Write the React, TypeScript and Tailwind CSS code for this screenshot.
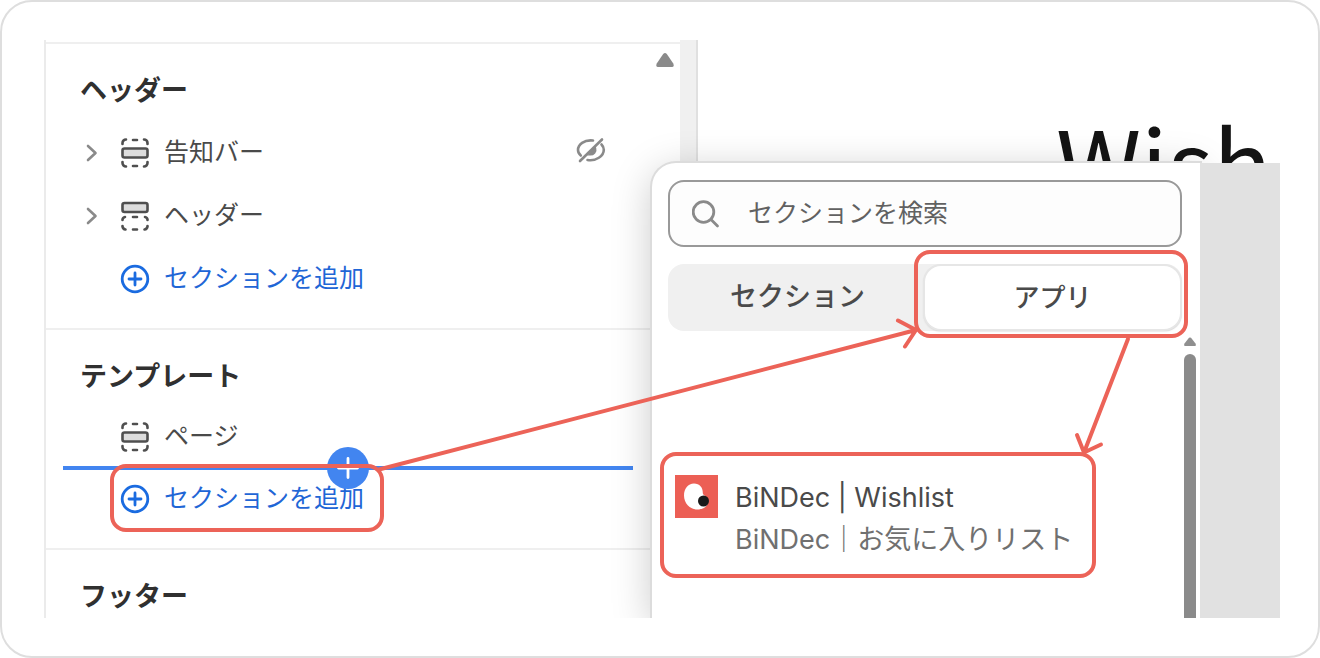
import type { ReactNode } from 'react';

const jp = "font-['Noto_Sans_CJK_JP',sans-serif]";

function SectionIcon() {
  return (
    <svg width="28" height="30" viewBox="0 0 28 30" fill="none" stroke="#4f4f4f" strokeWidth="2.6" strokeLinecap="round">
      <path d="M1.5 6V5a3.5 3.5 0 0 1 3.5-3.5M23 1.5A3.5 3.5 0 0 1 26.5 5v1M12 2h4M1.5 24v1A3.5 3.5 0 0 0 5 28.5M26.5 24v1a3.5 3.5 0 0 1-3.5 3.5M12 28h4" />
      <rect x="1.5" y="10.5" width="25" height="9" rx="2" fill="#ddd" />
    </svg>
  );
}

function HeaderIcon() {
  return (
    <svg width="28" height="30" viewBox="0 0 28 30" fill="none" stroke="#4f4f4f" strokeWidth="2.6" strokeLinecap="round">
      <rect x="1.5" y="2" width="25" height="9" rx="2" fill="#ddd" />
      <path d="M1.5 19v-.5A3 3 0 0 1 4 16M24 16a3 3 0 0 1 2.5 2.5V19M12 16h4M1.5 25v.5A3.5 3.5 0 0 0 4.5 28.5M26.5 25v.5a3.5 3.5 0 0 1-3 3M12 28.5h4" />
    </svg>
  );
}

function ChevronIcon() {
  return (
    <svg width="12" height="18" viewBox="0 0 12 18" fill="none" stroke="#8a8a8a" strokeWidth="2.6" strokeLinecap="round" strokeLinejoin="round">
      <path d="M2 2l7.5 7L2 16" />
    </svg>
  );
}

function PlusCircleIcon() {
  return (
    <svg width="30" height="30" viewBox="0 0 30 30" fill="none" stroke="#1a6be0" strokeWidth="2.8" strokeLinecap="round">
      <circle cx="15" cy="15" r="12.8" />
      <path d="M15 9v12M9 15h12" />
    </svg>
  );
}

function HiddenIcon() {
  return (
    <svg width="30" height="28" viewBox="0 0 30 28" fill="none" stroke="#8a8a8a" strokeWidth="2.6" strokeLinecap="round">
      <path d="M26 2.500L4 24" />
      <path d="M17 3.500C8 2.500 2 7.500 2 13c0 2 1 4 2.800 5.500M25.500 7.500c1.500 1.600 2.300 3.500 2.300 5.200C27.800 19 20 24.500 11.500 23" />
      <path d="M19 11.500c1 3-1.500 6-5 5.800z" fill="#8a8a8a" />
    </svg>
  );
}

function SearchIcon() {
  return (
    <svg width="28" height="28" viewBox="0 0 28 28" fill="none" stroke="#8a8a8a" strokeWidth="2.8" strokeLinecap="round">
      <circle cx="11.500" cy="12" r="10.300" />
      <path d="M19 19.500l6.500 6.500" />
    </svg>
  );
}

function AppLogo() {
  return (
    <svg width="43" height="43" viewBox="0 0 43 43">
      <rect width="43" height="43" fill="#ec5f55" />
      <path d="M19 8.500c5.500 0 9 4 8.800 9.500-.1 2.500 5.500 3.500 5.500 8 0 5-5 8.500-11 8.500C14.500 34.500 9 28 9 20.500 9 13.500 13 8.500 19 8.500z" fill="#fff" />
      <circle cx="28.500" cy="26" r="5.500" fill="#1a1a1a" />
    </svg>
  );
}

function Section({ title, children }: { title: string; children?: ReactNode }) {
  return (
    <section className="border-t-2 border-[#efefef] pt-3.5 pb-[18px]">
      <h2 className="flex h-[63px] items-center pl-[34px] text-[27px] font-bold text-[#303030]">{title}</h2>
      {children}
    </section>
  );
}

function Row({ icon, label, expandable, hidden, short }: {
  icon: ReactNode;
  label: string;
  expandable?: boolean;
  hidden?: boolean;
  short?: boolean;
}) {
  return (
    <div className={`flex items-center pl-10 pr-[74px] ${short ? 'h-[60px]' : 'h-[63px]'}`}>
      <span className="w-[35px]">{expandable && <ChevronIcon />}</span>
      <span className="w-[43px]">{icon}</span>
      <span className="flex-1 pb-1 text-[25px] text-[#4a4a4a]">{label}</span>
      {hidden && <button type="button" aria-label="表示" className="pb-1"><HiddenIcon /></button>}
    </div>
  );
}

function AddSection() {
  return (
    <button type="button" className="flex h-[63px] items-center gap-3.5 pl-[74px] text-[25px] text-[#1f66d6]">
      <PlusCircleIcon />
      <span className="pb-1">セクションを追加</span>
    </button>
  );
}

function Sidebar() {
  return (
    <aside className="relative w-[636px] shrink-0 border-l-2 border-[#ebebeb] pt-0.5">
      <Section title="ヘッダー">
        <Row icon={<SectionIcon />} label="告知バー" expandable hidden />
        <Row icon={<HeaderIcon />} label="ヘッダー" expandable />
        <AddSection />
      </Section>
      <Section title="テンプレート">
        <Row icon={<SectionIcon />} label="ページ" short />
        <div className="relative">
          <AddSection />
          <div className="absolute -top-px left-[17px] flex h-1 w-[570px] items-center justify-center bg-[#4285f0]">
            <button type="button" aria-label="追加" className="flex size-[42px] shrink-0 items-center justify-center rounded-full bg-[#4285f0]">
              <svg width="22" height="22" viewBox="0 0 22 22" stroke="#fff" strokeWidth="2.8" strokeLinecap="round">
                <path d="M11 1.500v19M1.500 11h19" />
              </svg>
            </button>
          </div>
        </div>
      </Section>
      <Section title="フッター" />
      <svg className="absolute top-3 right-[6px]" width="18" height="15" viewBox="0 0 18 15" fill="#8a8a8a">
        <path d="M7.200 2Q9 0 10.800 2L17.300 11.500Q18.500 15 16 15H2Q-.5 15 .7 11.500z" />
      </svg>
    </aside>
  );
}

function SectionPicker() {
  return (
    <div className="absolute top-[123px] bottom-0 left-[608px] w-[548px] rounded-tl-[24px] bg-white pt-[17px] pr-[18px] pl-4 shadow-[0_0_0_2px_#dcdcdc,0_8px_40px_rgba(0,0,0,0.22)]">
      <label className="flex h-[67px] items-center gap-7 rounded-2xl border-2 border-[#999] bg-[#fdfdfd] pl-[22px]">
        <SearchIcon />
        <input
          type="search"
          aria-label="セクションを検索"
          placeholder="セクションを検索"
          className="min-w-0 flex-1 bg-transparent pb-1 text-[25px] text-[#616161] outline-none placeholder:text-[#616161]"
        />
      </label>
      <div className="mt-[17px] flex h-[67px] rounded-2xl bg-[#f0f0f0] p-0.5">
        <button type="button" className="flex-1 pb-1 text-[27px] font-medium text-[#4a4a4a]">セクション</button>
        <button type="button" className="flex-1 rounded-2xl bg-white pb-1 text-[26px] font-medium text-[#4a4a4a] shadow-[0_0_0_2px_#e6e6e6,0_1px_2px_1px_#bbb]">アプリ</button>
      </div>
      <button type="button" className="mt-36 flex items-start gap-[17px] pl-[7px] text-left">
        <AppLogo />
        <span className="flex flex-col pt-0.5 font-['Inter','Noto_Sans_CJK_JP',sans-serif] text-[27px] leading-[42px]">
          <span className="text-[#4a4a4a]">BiNDec | Wishlist</span>
          <span className="text-[#707070]">BiNDec｜お気に入りリスト</span>
        </span>
      </button>
      <div className="absolute top-[174px] right-1 bottom-0 flex w-3 flex-col gap-2">
        <svg className="shrink-0" width="12" height="9" viewBox="0 0 12 9" fill="#8f8f8f">
          <path d="M5 .8Q6 0 7 .8L11.500 6.500Q12.500 9 11 9H1Q-.5 9 .5 6.500z" />
        </svg>
        <div className="flex-1 rounded-t-full bg-[#8a8a8a]" />
      </div>
    </div>
  );
}

function Callouts() {
  return (
    <svg className="pointer-events-none absolute top-0 left-0 z-20" width="1236" height="578" viewBox="44 40 1236 578" fill="none" stroke="#ec6358" strokeWidth="4" strokeLinecap="round" strokeLinejoin="round">
      <rect x="112" y="466" width="270" height="64" rx="14" />
      <rect x="916" y="252" width="270" height="84" rx="14" />
      <rect x="662" y="454" width="432" height="122" rx="14" />
      <path d="M379 469.500L916 330M898 320.500L916 330L905 346.500" />
      <path d="M1128 339L1084 452.500M1077 435L1084 452.500L1101 444.500" />
    </svg>
  );
}

export default function App() {
  return (
    <main className={`min-h-[658px] rounded-[32px] border-2 border-[#dedede] bg-white py-[38px] pr-[38px] pl-[42px] ${jp}`}>
      <div className="relative">
        <div className="relative flex h-[578px] overflow-hidden">
          <Sidebar />
          <div className="w-[18px] shrink-0 border-r-2 border-[#e0e0e0] bg-[#f0f0f0]" />
          <div className="flex min-w-0 flex-1 flex-col">
            <div className="h-[123px] overflow-hidden pt-[60px] pr-2 text-right">
              <h1 className="text-[97px] leading-[120px] text-[#141414]">Wish</h1>
            </div>
            {/* starts where the picker ends, so the picker's shadow stays off it */}
            <div className="z-10 ml-[502px] flex-1 bg-[#e1e1e1]" />
          </div>
          <SectionPicker />
        </div>
        <Callouts />
      </div>
    </main>
  );
}
